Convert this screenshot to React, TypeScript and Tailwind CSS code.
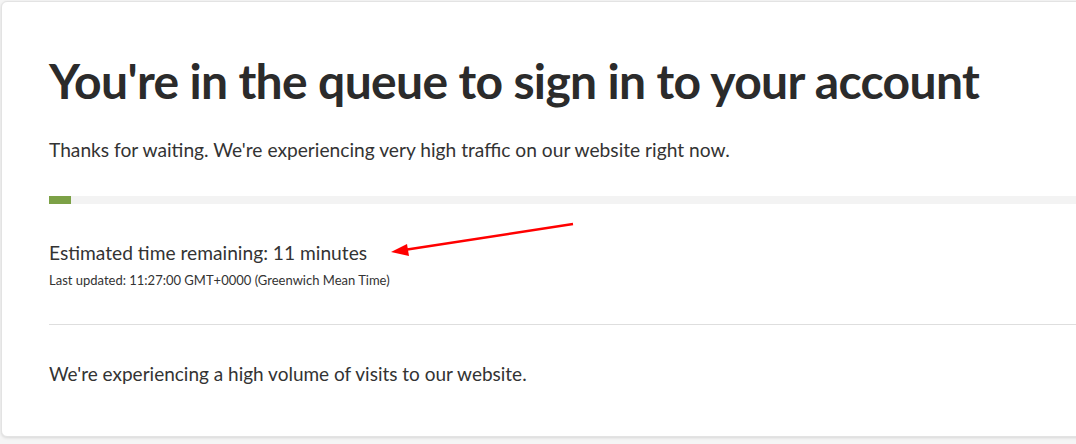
const App = () => {
  return (
    <div className="relative w-screen h-[444px] overflow-hidden bg-[#f5f5f5] font-['Lato','Liberation_Sans',sans-serif] text-[#333]">
      <div className="absolute left-[1px] top-[1px] w-[1200px] h-[436px] bg-white rounded-md border border-[#e3e3e3] shadow-[0_1px_3px_rgba(0,0,0,0.12)]">
        <div className="pl-[47px] pt-[47px]">
          <h1 className="text-[48px] font-bold leading-[64px] tracking-[-0.65px] text-[#2b2b2b]">
            You're in the queue to sign in to your account
          </h1>
          <p className="mt-[22px] text-[19.2px] leading-[30px]">
            Thanks for waiting. We're experiencing very high traffic on our website right now.
          </p>
          <div className="mt-[31px] h-[8px] bg-[#f3f3f3]">
            <div className="h-full w-[22px] bg-[#7ca146]" />
          </div>
          <p className="mt-[36px] text-[19.2px] leading-[26px]">Estimated time remaining: 11 minutes</p>
          <p className="mt-[5px] text-[13px] leading-[18px]">
            Last updated: 11:27:00 GMT+0000 (Greenwich Mean Time)
          </p>
          <div className="mt-[35px] border-t border-[#dedede]" />
          <p className="mt-[34px] text-[19px] leading-[30px]">
            We're experiencing a high volume of visits to our website.
          </p>
        </div>
      </div>
      <svg className="absolute left-0 top-0" width="1076" height="444">
        <line x1="573" y1="224" x2="404" y2="250" stroke="#f00" strokeWidth="2.5" />
        <polygon points="391,252 407,244 409,256" fill="#f00" />
      </svg>
    </div>
  );
};

export default App;
